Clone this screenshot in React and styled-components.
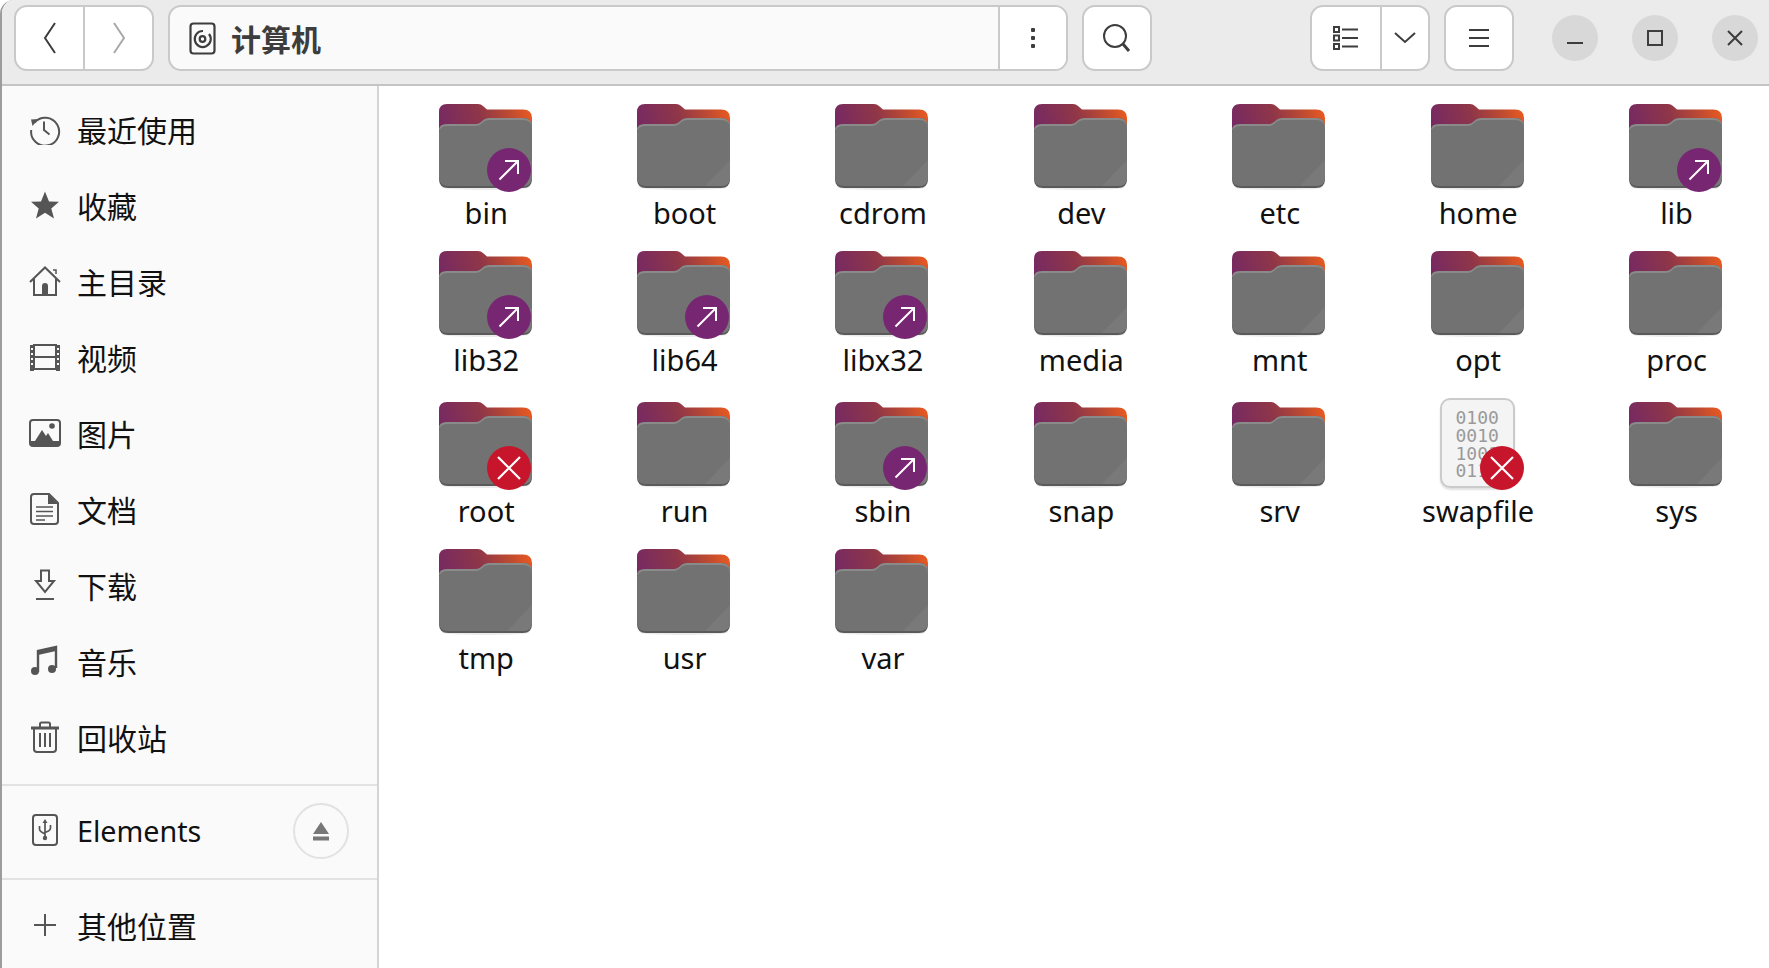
import styled, { createGlobalStyle } from "styled-components";

const GlobalStyle = createGlobalStyle`
  html, body {
    margin: 0;
    padding: 0;
    height: 100%;
    background: #ffffff;
    overflow: hidden;
  }
  #root {
    height: 100%;
  }
`;

const FONT = `"Noto Sans", "Noto Sans CJK SC", sans-serif`;
const CJK = `"Noto Sans CJK SC", "Noto Sans", sans-serif`;
const INK = "#3d3d3d";
const GLYPH = "#555555";

const files = [
  { name: "bin", badge: "link" },
  { name: "boot" },
  { name: "cdrom" },
  { name: "dev" },
  { name: "etc" },
  { name: "home" },
  { name: "lib", badge: "link" },
  { name: "lib32", badge: "link" },
  { name: "lib64", badge: "link" },
  { name: "libx32", badge: "link" },
  { name: "media" },
  { name: "mnt" },
  { name: "opt" },
  { name: "proc" },
  { name: "root", badge: "locked" },
  { name: "run" },
  { name: "sbin", badge: "link" },
  { name: "snap" },
  { name: "srv" },
  { name: "swapfile", badge: "locked", binary: true },
  { name: "sys" },
  { name: "tmp" },
  { name: "usr" },
  { name: "var" },
];

const RecentIcon = () => (
  <svg width="32" height="32" viewBox="0 0 32 32" fill="none" stroke={GLYPH} strokeWidth="2">
    <path d="M5.5 9.5A14 14 0 1 1 2.2 17" />
    <path d="M2 6.5 L9.5 6 L3.5 13 Z" fill={GLYPH} stroke="none" />
    <path d="M15 8.5V17L20.5 21.5" />
  </svg>
);

const StarIcon = () => (
  <svg width="32" height="32" viewBox="0 0 32 32">
    <path d="M16 2.5L20 12.4L30 12.8L22.3 19.4L25 29.5L16 23.8L7 29.5L9.7 19.4L2 12.8L12 12.4Z" fill={GLYPH} />
  </svg>
);

const HomeIcon = () => (
  <svg width="32" height="32" viewBox="0 0 32 32" fill="none" stroke={GLYPH} strokeWidth="2">
    <path d="M1 17L16 2.5L31 17" />
    <path d="M5 14V30H27V14" />
    <path d="M13 30V21Q13 18 16 18Q19 18 19 21V30Z" fill={GLYPH} stroke="none" />
    <path d="M24 5H27V9" strokeWidth="1.5" />
  </svg>
);

const FilmIcon = () => (
  <svg width="32" height="32" viewBox="0 0 32 32" fill="none">
    <rect x="5" y="4" width="22" height="24" stroke={GLYPH} strokeWidth="2" />
    <path d="M5 16H27" stroke={GLYPH} strokeWidth="2" />
    <path d="M1 4H5V30H1ZM27 4H31V30H27Z" fill={GLYPH} />
    <path d="M2 8H4M2 13H4M2 18H4M2 23H4M28 8H30M28 13H30M28 18H30M28 23H30" stroke="#fafafa" strokeWidth="2" />
  </svg>
);

const PictureIcon = () => (
  <svg width="32" height="32" viewBox="0 0 32 32" fill="none">
    <rect x="1" y="3" width="30" height="26" rx="3" stroke={GLYPH} strokeWidth="2" />
    <path d="M1 24H31V26Q31 29 28 29H4Q1 29 1 26Z" fill={GLYPH} />
    <path d="M6 24L13 13L17 19L19 16L24 24Z" fill={GLYPH} />
    <circle cx="23" cy="9" r="2.8" fill={GLYPH} />
  </svg>
);

const DocumentIcon = () => (
  <svg width="32" height="32" viewBox="0 0 32 32" fill="none" stroke={GLYPH} strokeWidth="2">
    <path d="M5 1H20L29 10V28Q29 31 26 31H5Q2 31 2 28V4Q2 1 5 1Z" />
    <path d="M19 1V11H29Z" fill={GLYPH} stroke="none" />
    <path d="M7 14H24M7 18.5H24M7 23H24M7 27H16" strokeWidth="1.7" />
  </svg>
);

const DownloadIcon = () => (
  <svg width="32" height="32" viewBox="0 0 32 32" fill="none" stroke={GLYPH} strokeWidth="2">
    <path d="M12 1.5H20V12H25L16 23L7 12H12Z" />
    <path d="M7 30H25" />
  </svg>
);

const MusicIcon = () => (
  <svg width="32" height="32" viewBox="0 0 32 32" fill="none">
    <path d="M9 27V6L27 2V23" stroke={GLYPH} strokeWidth="2.4" />
    <path d="M9 6L27 2V6L9 10Z" fill={GLYPH} />
    <circle cx="6" cy="26" r="4" fill={GLYPH} />
    <circle cx="23" cy="24" r="4" fill={GLYPH} />
  </svg>
);

const TrashIcon = () => (
  <svg width="32" height="32" viewBox="0 0 32 32" fill="none" stroke={GLYPH} strokeWidth="2">
    <path d="M5 8V28Q5 31 8 31H24Q27 31 27 28V8" />
    <path d="M2 7H30" strokeWidth="3" />
    <path d="M11 6V3Q11 1.5 12.5 1.5H19.5Q21 1.5 21 3V6" />
    <path d="M11 12V26M16 12V26M21 12V26" />
  </svg>
);

const UsbIcon = () => (
  <svg width="32" height="32" viewBox="0 0 32 32" fill="none" stroke={GLYPH} strokeWidth="2">
    <rect x="4" y="1" width="24" height="30" rx="3" />
    <path d="M16 7V24M10.5 12V15Q10.5 17 12.5 18L16 20M21.5 11V14Q21.5 16 19.5 17L16 18.5" strokeWidth="1.7" />
    <path d="M16 5L18.5 9H13.5Z" fill={GLYPH} stroke="none" />
    <circle cx="16" cy="24" r="2.2" fill={GLYPH} stroke="none" />
  </svg>
);

const PlusIcon = () => (
  <svg width="32" height="32" viewBox="0 0 32 32" fill="none" stroke={GLYPH} strokeWidth="2">
    <path d="M16 5V27M5 16H27" />
  </svg>
);

const places = [
  { label: "最近使用", Icon: RecentIcon },
  { label: "收藏", Icon: StarIcon },
  { label: "主目录", Icon: HomeIcon },
  { label: "视频", Icon: FilmIcon },
  { label: "图片", Icon: PictureIcon },
  { label: "文档", Icon: DocumentIcon },
  { label: "下载", Icon: DownloadIcon },
  { label: "音乐", Icon: MusicIcon },
  { label: "回收站", Icon: TrashIcon },
];

const FolderArt = () => (
  <svg width="93" height="86" viewBox="0 0 93 86">
    <defs>
      <linearGradient id="folderBack" x1="0" y1="0.35" x2="1" y2="0.2">
        <stop offset="0" stopColor="#772a62" />
        <stop offset="0.45" stopColor="#8f3648" />
        <stop offset="0.75" stopColor="#bb4a32" />
        <stop offset="1" stopColor="#ea5a20" />
      </linearGradient>
    </defs>
    <ellipse cx="46.5" cy="83.5" rx="44" ry="2.5" fill="#000000" opacity="0.08" />
    <path d="M8 0H39Q42 0 44 2L48 5.5H84Q93 5.5 93 14V44H0V8Q0 0 8 0Z" fill="url(#folderBack)" />
    <path d="M8 20H37Q40 20 42 18L45 15.5Q47 14 50 14H84Q93 14 93 23V75Q93 84 84 84H9Q0 84 0 75V28Q0 20 8 20Z" fill="#5a5a5a" />
    <path d="M8 20H37Q40 20 42 18L45 15.5Q47 14 50 14H84Q93 14 93 23V26H0Q0 20 8 20Z" fill="#8a8a8a" />
    <path d="M8 22H37Q40 22 42 20L45 17.5Q47 16 50 16H84Q93 16 93 25V73Q93 82 84 82H9Q0 82 0 73V30Q0 22 8 22Z" fill="#727272" />
    <path d="M93 56V73Q93 82 84 82H68Z" fill="#797979" />
  </svg>
);

const LinkGlyph = () => (
  <svg width="24" height="24" viewBox="0 0 24 24" fill="none" stroke="#ffffff" strokeWidth="2">
    <path d="M2.5 21.5L21 3" />
    <path d="M8 3H21V16" />
  </svg>
);

const LockedGlyph = () => (
  <svg width="26" height="26" viewBox="0 0 26 26" fill="none" stroke="#ffffff" strokeWidth="2.2">
    <path d="M2 2L24 24M24 2L2 24" />
  </svg>
);

const App = () => {
  return (
    <Window>
      <GlobalStyle />
      <Header>
        <BtnGroup>
          <HeadBtn $w={69}>
            <svg width="14" height="32" viewBox="0 0 14 32" fill="none" stroke={INK} strokeWidth="2">
              <path d="M12 1L2 16L12 31" />
            </svg>
          </HeadBtn>
          <HeadBtn $w={67}>
            <svg width="14" height="32" viewBox="0 0 14 32" fill="none" stroke="#a8a8a8" strokeWidth="2">
              <path d="M2 1L12 16L2 31" />
            </svg>
          </HeadBtn>
        </BtnGroup>
        <PathBar>
          <PathCrumb>
            <svg width="27" height="33" viewBox="0 0 27 33" fill="none" stroke={INK} strokeWidth="2.2">
              <rect x="1.5" y="1.5" width="24" height="30" rx="3" />
              <path d="M20 12A8 8 0 1 1 14 9" />
              <circle cx="13.5" cy="17" r="2.8" />
            </svg>
            <PathText>计算机</PathText>
          </PathCrumb>
          <PathMenu>
            <svg width="6" height="24" viewBox="0 0 6 24" fill={INK}>
              <rect x="1" y="2" width="4" height="4" rx="1" />
              <rect x="1" y="10" width="4" height="4" rx="1" />
              <rect x="1" y="18" width="4" height="4" rx="1" />
            </svg>
          </PathMenu>
        </PathBar>
        <BtnGroup>
          <HeadBtn $w={66}>
            <svg width="30" height="30" viewBox="0 0 30 30" fill="none" stroke={INK} strokeWidth="2">
              <circle cx="13" cy="13" r="11" />
              <path d="M21 21L27 28" strokeWidth="3" />
            </svg>
          </HeadBtn>
        </BtnGroup>
        <RightTools>
          <BtnGroup>
            <HeadBtn $w={70}>
              <svg width="26" height="24" viewBox="0 0 26 24" fill="none" stroke={INK} strokeWidth="2">
                <rect x="1" y="1" width="5" height="5" />
                <rect x="1" y="9.5" width="5" height="5" />
                <rect x="1" y="18" width="5" height="5" />
                <path d="M9 3.5H25M9 12H25M9 20.5H25" />
              </svg>
            </HeadBtn>
            <HeadBtn $w={46}>
              <svg width="22" height="12" viewBox="0 0 22 12" fill="none" stroke={INK} strokeWidth="2">
                <path d="M1 1L11 10L21 1" />
              </svg>
            </HeadBtn>
          </BtnGroup>
          <BtnGroup>
            <HeadBtn $w={66}>
              <svg width="22" height="20" viewBox="0 0 22 20" fill="none" stroke={INK} strokeWidth="2">
                <path d="M1 2H21M1 10H21M1 18H21" />
              </svg>
            </HeadBtn>
          </BtnGroup>
          <WindowBtns>
            <WindowBtn>
              <svg width="20" height="20" viewBox="0 0 20 20" fill="none" stroke={INK} strokeWidth="2">
                <path d="M2 15H18" />
              </svg>
            </WindowBtn>
            <WindowBtn>
              <svg width="18" height="18" viewBox="0 0 18 18" fill="none" stroke={INK} strokeWidth="2">
                <rect x="2" y="2" width="14" height="14" />
              </svg>
            </WindowBtn>
            <WindowBtn>
              <svg width="18" height="18" viewBox="0 0 18 18" fill="none" stroke={INK} strokeWidth="2">
                <path d="M2 2L16 16M16 2L2 16" />
              </svg>
            </WindowBtn>
          </WindowBtns>
        </RightTools>
      </Header>
      <Body>
        <Sidebar>
          <SideSection $pad="5px 0 9px">
            {places.map(({ label, Icon }) => (
              <SideRow key={label}>
                <SideIcon>
                  <Icon />
                </SideIcon>
                <SideLabel>{label}</SideLabel>
              </SideRow>
            ))}
          </SideSection>
          <SideSection $line $pad="6px 0 10px">
            <SideRow>
              <SideIcon>
                <UsbIcon />
              </SideIcon>
              <SideLabel $latin>Elements</SideLabel>
              <EjectBtn>
                <svg width="18" height="20" viewBox="0 0 18 20" fill="#777777">
                  <path d="M9 1L17 13H1Z" />
                  <rect x="1" y="15.5" width="16" height="4" />
                </svg>
              </EjectBtn>
            </SideRow>
          </SideSection>
          <SideSection $line $pad="7px 0 7px">
            <SideRow>
              <SideIcon>
                <PlusIcon />
              </SideIcon>
              <SideLabel>其他位置</SideLabel>
            </SideRow>
          </SideSection>
        </Sidebar>
        <FileGrid>
          {files.map((file) => (
            <FileCell key={file.name}>
              <FileIcon>
                {file.binary ? (
                  <BinaryCard>
                    <span>0100</span>
                    <span>0010</span>
                    <span>1001</span>
                    <span>0110</span>
                  </BinaryCard>
                ) : (
                  <FolderArt />
                )}
                {file.badge && (
                  <Badge $kind={file.badge} $binary={file.binary}>
                    {file.badge === "link" ? <LinkGlyph /> : <LockedGlyph />}
                  </Badge>
                )}
              </FileIcon>
              <FileName>{file.name}</FileName>
            </FileCell>
          ))}
        </FileGrid>
      </Body>
    </Window>
  );
};

const Window = styled.div`
  height: 100vh;
  box-sizing: border-box;
  border-left: 2px solid #9c9c9c;
  border-top-left-radius: 14px;
  display: flex;
  flex-direction: column;
  overflow: hidden;
`;

const Header = styled.header`
  height: 86px;
  flex: none;
  box-sizing: border-box;
  display: flex;
  align-items: flex-start;
  gap: 14px;
  padding: 5px 0 0 12px;
  background-color: #ebebeb;
  border-bottom: 2px solid #c4c4c4;
`;

const BtnGroup = styled.div`
  display: flex;
  height: 66px;
  box-sizing: border-box;
  background-color: #ffffff;
  border: 2px solid #c9c9c9;
  border-radius: 13px;
  overflow: hidden;
`;

const HeadBtn = styled.div`
  width: ${(props) => props.$w}px;
  box-sizing: border-box;
  display: flex;
  align-items: center;
  justify-content: center;
  &:not(:last-child) {
    border-right: 2px solid #c9c9c9;
  }
`;

const PathBar = styled.div`
  width: 900px;
  height: 66px;
  box-sizing: border-box;
  display: flex;
  background-color: #fafafa;
  border: 2px solid #c9c9c9;
  border-radius: 13px;
  overflow: hidden;
`;

const PathCrumb = styled.div`
  flex: 1;
  display: flex;
  align-items: center;
  gap: 15px;
  padding-left: 19px;
`;

const PathText = styled.span`
  font-family: ${CJK};
  font-weight: 700;
  font-size: 30px;
  color: ${INK};
`;

const PathMenu = styled.div`
  width: 68px;
  box-sizing: border-box;
  display: flex;
  align-items: center;
  justify-content: center;
  background-color: #ffffff;
  border-left: 2px solid #c9c9c9;
`;

const RightTools = styled.div`
  margin-left: auto;
  display: flex;
  align-items: flex-start;
  gap: 14px;
`;

const WindowBtns = styled.div`
  display: flex;
  gap: 34px;
  padding: 10px 11px 0 24px;
`;

const WindowBtn = styled.div`
  width: 46px;
  height: 46px;
  border-radius: 50%;
  display: flex;
  align-items: center;
  justify-content: center;
  background-color: #d8d8d8;
`;

const Body = styled.div`
  flex: 1;
  min-height: 0;
  display: flex;
`;

const Sidebar = styled.nav`
  width: 377px;
  flex: none;
  box-sizing: border-box;
  background-color: #fafafa;
  border-right: 2px solid #d4d4d4;
`;

const SideSection = styled.div`
  padding: ${(props) => props.$pad};
  border-top: ${(props) => (props.$line ? "2px solid #e2e2e2" : "none")};
`;

const SideRow = styled.div`
  height: 76px;
  display: flex;
  align-items: center;
  padding-left: 27px;
  padding-right: 28px;
`;

const SideIcon = styled.div`
  width: 32px;
  height: 32px;
  flex: none;
  margin-right: 16px;
  display: flex;
`;

const SideLabel = styled.span`
  font-family: ${FONT};
  font-size: ${(props) => (props.$latin ? "28.7px" : "30px")};
  color: #111111;
`;

const EjectBtn = styled.div`
  margin: 2px 0 0 auto;
  width: 56px;
  height: 56px;
  box-sizing: border-box;
  display: flex;
  align-items: center;
  justify-content: center;
  border: 2px solid #e2e2e2;
  border-radius: 50%;
`;

const FileGrid = styled.main`
  flex: 1;
  min-width: 0;
  display: grid;
  grid-template-columns: repeat(7, 198.4px);
  grid-auto-rows: max-content;
  row-gap: 18px;
  padding: 18px 0 0 8px;
  background-color: #ffffff;
`;

const FileCell = styled.div`
  display: flex;
  flex-direction: column;
  align-items: center;
  justify-content: flex-end;
`;

const FileIcon = styled.div`
  position: relative;
  display: flex;
  height: fit-content;
  margin: 0 2px 3px 0;
`;

const BinaryCard = styled.div`
  width: 75px;
  height: 90px;
  box-sizing: border-box;
  display: flex;
  flex-direction: column;
  align-items: center;
  border: 2px solid #cbcbcb;
  border-radius: 10px;
  background-color: #f4f4f4;
  box-shadow: 0 2px 2px rgba(0, 0, 0, 0.12);
  padding-top: 9px;
  font-family: "DejaVu Sans Mono", monospace;
  font-size: 18px;
  line-height: 17.8px;
  color: #9a9a9a;
`;

const Badge = styled.div`
  position: absolute;
  right: ${(props) => (props.$binary ? "-9px" : "1px")};
  bottom: -2px;
  width: 44px;
  height: 44px;
  border-radius: 50%;
  display: flex;
  align-items: center;
  justify-content: center;
  background-color: ${(props) => (props.$kind === "link" ? "#772772" : "#c7162b")};
`;

const FileName = styled.div`
  font-family: ${FONT};
  font-size: 29px;
  line-height: 40px;
  color: #111111;
`;

export default App;
